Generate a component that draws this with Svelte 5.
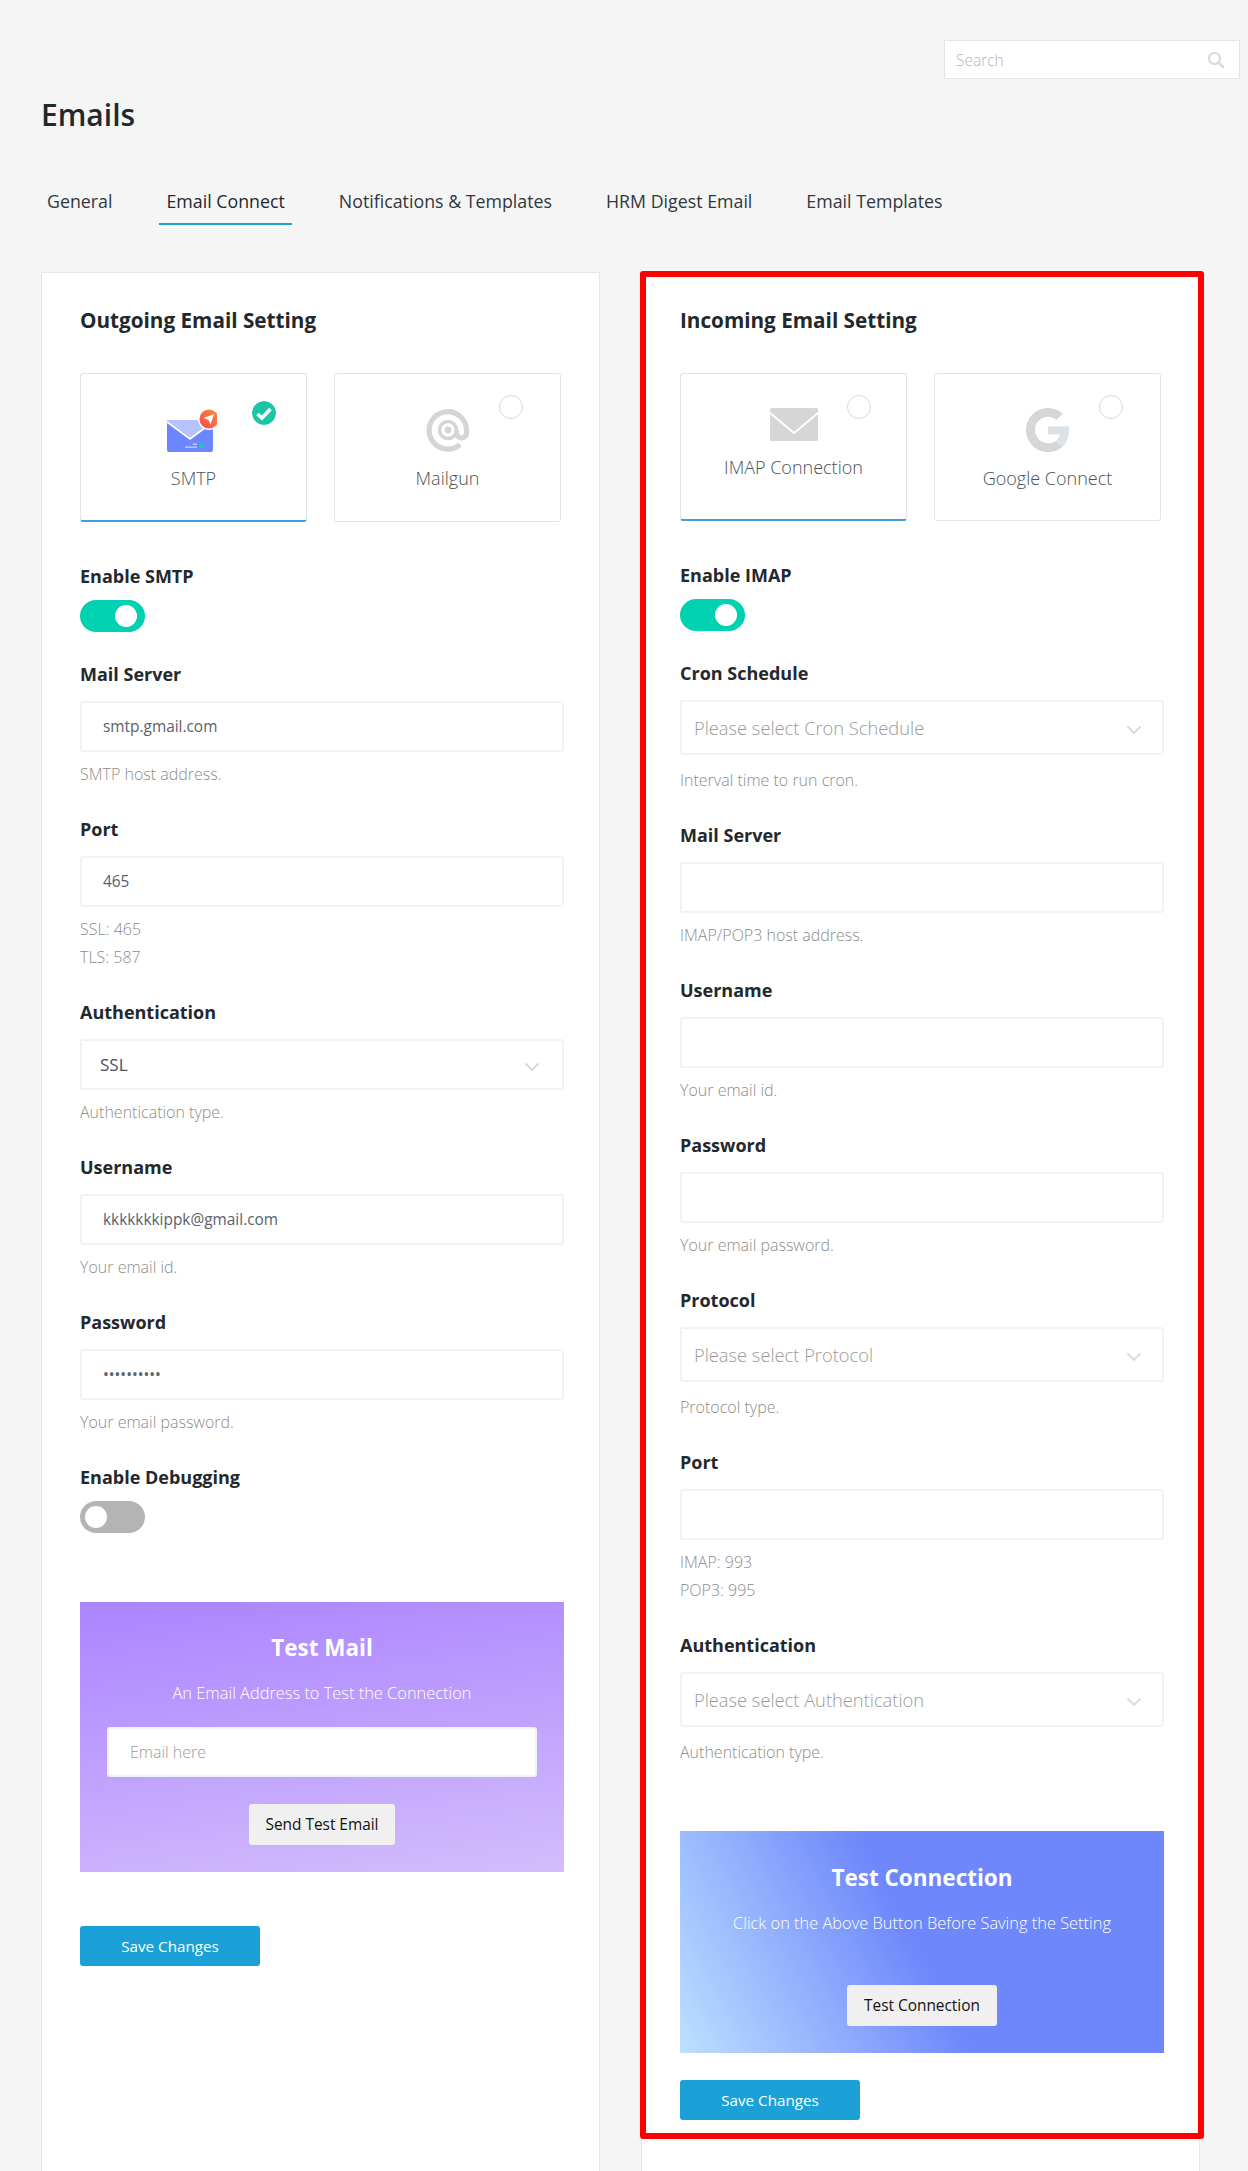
<script>
  // Email settings page: two cards of form fields with provider pickers and test panels.
  const tabs = ['General', 'Email Connect', 'Notifications & Templates', 'HRM Digest Email', 'Email Templates'];

  const smtpTop = [
    { label: 'Mail Server', value: 'smtp.gmail.com', hint: ['SMTP host address.'] },
    { label: 'Port', value: '465', hint: ['SSL: 465', 'TLS: 587'] },
    { label: 'Authentication', select: 'SSL', filled: true, short: true, hint: ['Authentication type.'] },
    { label: 'Username', value: 'kkkkkkkippk@gmail.com', hint: ['Your email id.'] },
    { label: 'Password', value: 'abcdefghij', type: 'password', hint: ['Your email password.'] },
  ];

  const imapFields = [
    { label: 'Cron Schedule', select: 'Please select Cron Schedule', hint: ['Interval time to run cron.'] },
    { label: 'Mail Server', value: '', hint: ['IMAP/POP3 host address.'] },
    { label: 'Username', value: '', hint: ['Your email id.'] },
    { label: 'Password', value: '', hint: ['Your email password.'] },
    { label: 'Protocol', select: 'Please select Protocol', hint: ['Protocol type.'] },
    { label: 'Port', value: '', hint: ['IMAP: 993', 'POP3: 995'] },
    { label: 'Authentication', select: 'Please select Authentication', hint: ['Authentication type.'] },
  ];
</script>

{#snippet field(f)}
  <div class="group">
    <div class="label">{f.label}</div>
    {#if f.select}
      <div class="select" class:short={f.short} class:filled={f.filled}>
        <span>{f.select}</span>
        <svg class="chev" width="16" height="10" viewBox="0 0 16 10"><path d="M1.5 1.5 8 8l6.500-6.500" fill="none" stroke="#d5dae0" stroke-width="1.800" /></svg>
      </div>
    {:else}
      <input class="input" type={f.type ?? 'text'} value={f.value} aria-label={f.label} />
    {/if}
    <div class="hint" class:tight={f.select && !f.short}>
      {#each f.hint as line}<div>{line}</div>{/each}
    </div>
  </div>
{/snippet}

{#snippet toggle(on)}
  <div class="toggle" class:on><span class="knob"></span></div>
{/snippet}

<div class="page">
  <div class="search">
    <span>Search</span>
    <svg width="18" height="18" viewBox="0 0 18 18"><circle cx="7.500" cy="7.500" r="5.500" fill="none" stroke="#dadada" stroke-width="2.200" /><path d="M11.500 11.500 16 16" stroke="#dadada" stroke-width="2.800" stroke-linecap="round" /></svg>
  </div>
  <h1>Emails</h1>
  <nav class="tabs">
    {#each tabs as t, i}
      <div class="tab" class:active={i === 1}>{t}</div>
    {/each}
  </nav>

  <div class="cols">
    <section class="card">
      <h2>Outgoing Email Setting</h2>
      <div class="providers">
        <div class="provider active">
          <svg class="check" width="24" height="24" viewBox="0 0 24 24"><circle cx="12" cy="12" r="12" fill="#1bc5a5" /><path d="M5.500 13 10 17 18.500 8" fill="none" stroke="#fff" stroke-width="3.600" /></svg>
          <svg class="logo smtp" width="50" height="44" viewBox="0 0 50 44">
            <defs>
              <linearGradient id="badge" x1="1" y1="0" x2="0" y2="1">
                <stop offset="0" stop-color="#f98f3a" />
                <stop offset="1" stop-color="#fb4450" />
              </linearGradient>
            </defs>
            <rect x="0" y="12" width="46" height="32" rx="2" fill="#6b86ff" />
            <path d="M0 14v-1a1 1 0 0 1 1-1h44a1 1 0 0 1 1 1v1L23 31z" fill="#b7c3ff" />
            <path d="M0 14 23 31 46 14" fill="none" stroke="#fff" stroke-width="1.600" />
            <circle cx="34.500" cy="38" r="2.500" fill="#19c9b0" />
            <rect x="26" y="35.500" width="4" height="1.500" fill="#c5d0ff" />
            <rect x="18" y="38.500" width="12" height="1.300" fill="#c5d0ff" />
            <circle cx="42" cy="11" r="11" fill="#fff" />
            <circle cx="42" cy="11" r="9.500" fill="url(#badge)" />
            <path d="M36.500 10 47 6 43.500 16.500 41.500 12z" fill="#fff" />
          </svg>
          <div class="name">SMTP</div>
        </div>
        <div class="provider">
          <span class="radio"></span>
          <svg class="logo" width="44" height="44" viewBox="0 0 44 44">
            <circle cx="22" cy="22" r="3.500" fill="#d5d5d5" />
            <circle cx="22" cy="22" r="8.500" fill="none" stroke="#d5d5d5" stroke-width="3.600" />
            <path d="M30.500 22v3a5 5 0 0 0 10 0V22A18.700 18.700 0 1 0 34 36.500" fill="none" stroke="#d5d5d5" stroke-width="5.200" />
          </svg>
          <div class="name">Mailgun</div>
        </div>
      </div>

      <div class="group">
        <div class="label">Enable SMTP</div>
        {@render toggle(true)}
      </div>
      {#each smtpTop as f}
        {@render field(f)}
      {/each}
      <div class="group debug">
        <div class="label">Enable Debugging</div>
        {@render toggle(false)}
      </div>

      <div class="panel purple">
        <h3>Test Mail</h3>
        <p>An Email Address to Test the Connection</p>
        <div class="panel-input">Email here</div>
        <button type="button" class="ghost">Send Test Email</button>
      </div>
      <button type="button" class="save mail">Save Changes</button>
    </section>

    <section class="card">
      <h2>Incoming Email Setting</h2>
      <div class="providers">
        <div class="provider active">
          <span class="radio"></span>
          <svg class="logo up" width="48" height="33" viewBox="0 0 48 33">
            <rect width="48" height="33" rx="1.500" fill="#d6d6d6" />
            <path d="M0 5 24 25 48 5" fill="none" stroke="#fff" stroke-width="2" />
          </svg>
          <div class="name">IMAP Connection</div>
        </div>
        <div class="provider">
          <span class="radio"></span>
          <svg class="logo" width="44" height="44" viewBox="0 0 48 48">
            <path fill="#d6d6d6" d="M24 9.500c3.900 0 6.900 1.500 9.100 3.500l6.800-6.800C35.700 2.300 30.300 0 24 0 14.600 0 6.500 5.400 2.600 13.200l7.900 6.100C12.400 13.700 17.700 9.500 24 9.500z" />
            <path fill="#dce3e8" d="M47 24.500c0-1.600-.2-3.100-.4-4.500H24v9h12.900c-.6 3-2.200 5.500-4.700 7.200l7.700 6C44.400 37.900 47 31.800 47 24.500z" />
            <path fill="#d6d6d6" d="M10.500 28.700C10 27.200 9.800 25.600 9.800 24s.3-3.200.7-4.700l-7.900-6.100C.9 16.500 0 20.100 0 24s.9 7.500 2.600 10.800l7.900-6.100z" />
            <path fill="#d6d6d6" d="M24 48c6.500 0 11.900-2.100 15.900-5.800l-7.700-6c-2.200 1.400-4.900 2.300-8.200 2.300-6.300 0-11.600-4.200-13.500-9.800l-7.900 6.100C6.500 42.600 14.600 48 24 48z" />
          </svg>
          <div class="name">Google Connect</div>
        </div>
      </div>

      <div class="group">
        <div class="label">Enable IMAP</div>
        {@render toggle(true)}
      </div>
      {#each imapFields as f}
        {@render field(f)}
      {/each}

      <div class="panel blue">
        <h3>Test Connection</h3>
        <p>Click on the Above Button Before Saving the Setting</p>
        <button type="button" class="ghost wide">Test Connection</button>
      </div>
      <button type="button" class="save imap">Save Changes</button>
    </section>
  </div>

  <div class="highlight"></div>
</div>

<style>
  :global(body) {
    background: #f5f5f5;
    font-family: "Open Sans", "Noto Sans", sans-serif;
    color: #23282d;
  }
  .page {
    position: relative;
    height: 2171px;
    overflow: hidden;
    box-sizing: border-box;
    padding: 40px 8px 0 41px;
  }
  .search {
    display: flex;
    align-items: center;
    justify-content: space-between;
    box-sizing: border-box;
    width: 296px;
    height: 39px;
    margin-left: auto;
    padding: 0 14px 0 11px;
    font-size: 15.500px;
    font-weight: 300;
    color: #b4b4b4;
    background: #fff;
    border: 1px solid #e5e5e5;
  }
  h1 {
    margin: 16px 0 0;
    font-size: 30px;
    font-weight: 600;
    line-height: 40px;
  }
  .tabs {
    display: flex;
    gap: 54px;
    margin: 52px 0 0 6px;
    font-size: 17.800px;
  }
  .tab {
    padding: 0 0 10px;
    line-height: 28px;
    color: #32373c;
    font-weight: 400;
  }
  .tab.active {
    margin: 0 -7px;
    padding: 0 7px 8px;
    color: #23282d;
    border-bottom: 2px solid #1ba0d7;
  }
  .cols {
    display: grid;
    grid-template-columns: 559px 559px;
    gap: 41px;
    margin-top: 47px;
  }
  .card {
    box-sizing: border-box;
    height: 1950px;
    padding: 32px 35px 0 38px;
    background: #fff;
    border: 1px solid #e6e6e6;
  }
  h2 {
    margin: 0;
    font-size: 20.700px;
    font-weight: 700;
    line-height: 30px;
    color: #23282d;
  }
  .providers {
    display: grid;
    grid-template-columns: 227px 227px;
    gap: 27px;
    margin: 38px 0 42px;
  }
  .provider {
    position: relative;
    box-sizing: border-box;
    display: flex;
    flex-direction: column;
    align-items: center;
    height: 149px;
    padding-top: 34px;
    border: 1px solid #e2e4e8;
    border-radius: 3px;
  }
  .card:last-child .provider {
    height: 148px;
  }
  .provider.active {
    border-bottom: 2px solid #3ba0da;
  }
  .logo {
    height: 44px;
  }
  .logo.up {
    height: 33px;
  }
  .logo.smtp {
    margin-right: 3px;
  }
  .name {
    margin-top: 14px;
    font-size: 18px;
    font-weight: 300;
    line-height: 24px;
    color: #4a5058;
  }
  .radio,
  .check {
    position: absolute;
    top: 21px;
    right: 37px;
    box-sizing: border-box;
    width: 24px;
    height: 24px;
    border: 1px solid #d8d8d8;
    border-radius: 50%;
  }
  .active .radio {
    right: 35px;
  }
  .check {
    top: 27px;
    right: 30px;
    border: 0;
  }
  .group {
    margin-bottom: 29px;
  }
  .group:has(> .toggle) {
    margin-bottom: 0;
  }
  .label {
    margin-bottom: 15px;
    font-size: 18px;
    font-weight: 700;
    line-height: 24px;
    color: #23282d;
  }
  .toggle {
    position: relative;
    width: 65px;
    height: 32px;
    margin: -3px 0 30px;
    background: #b4b4b4;
    border-radius: 16px;
  }
  .toggle.on {
    background: #00d1b0;
  }
  .knob {
    position: absolute;
    top: 5px;
    left: 5px;
    width: 22px;
    height: 22px;
    background: #fff;
    border-radius: 50%;
  }
  .toggle.on .knob {
    left: 35px;
  }
  .input,
  .select {
    display: flex;
    align-items: center;
    justify-content: space-between;
    box-sizing: border-box;
    width: 100%;
    height: 51px;
    padding: 0 21px;
    font: inherit;
    font-size: 15.400px;
    color: #5a6068;
    background: #fff;
    border: 2px solid #f0f2f5;
    border-radius: 3px;
    outline: 0;
  }
  .select {
    height: 55px;
    padding: 0 20px 0 12px;
    font-weight: 300;
    font-size: 18.300px;
    color: #9a9a9a;
  }
  .select.short {
    height: 51px;
    padding: 0 22px 0 18px;
  }
  .select.filled {
    color: #4a5058;
    font-weight: 400;
    font-size: 17px;
  }
  .chev {
    margin-top: 4px;
  }
  .hint {
    margin-top: 8px;
    font-size: 16px;
    font-weight: 300;
    line-height: 28px;
    color: #8c8c8c;
  }
  .hint.tight {
    margin-top: 11px;
  }
  .debug .toggle {
    margin-bottom: 69px;
  }
  .panel {
    display: flex;
    flex-direction: column;
    align-items: center;
    box-sizing: border-box;
    color: #fff;
  }
  .panel h3 {
    margin: 0;
    font-size: 22.500px;
    font-weight: 700;
    line-height: 30px;
  }
  .panel p {
    margin: 15px 0 0;
    font-size: 16.400px;
    font-weight: 300;
    line-height: 30px;
  }
  .purple {
    height: 270px;
    padding-top: 31px;
    background: linear-gradient(172deg, #ab84ff 0%, #d3bdfc 100%);
  }
  .blue {
    height: 222px;
    margin-top: 65px;
    padding-top: 32px;
    background: linear-gradient(62deg, #bde0ff 0%, #6e87fb 49%, #6e87fb 100%);
  }
  .panel-input {
    box-sizing: border-box;
    width: 430px;
    height: 50px;
    margin-top: 19px;
    padding: 0 21px;
    font-size: 16px;
    font-weight: 300;
    line-height: 46px;
    color: #9a9a9a;
    background: #fff;
    border: 2px solid #f0f2f5;
    border-radius: 3px;
  }
  .ghost {
    width: 146px;
    height: 41px;
    margin-top: 27px;
    padding: 0;
    font: inherit;
    font-size: 15.400px;
    color: #111;
    background: #f0f0f0;
    border: 0;
    border-radius: 3px;
  }
  .ghost.wide {
    width: 150px;
    margin-top: 47px;
  }
  .save {
    display: block;
    width: 180px;
    height: 40px;
    padding: 0;
    font: inherit;
    font-size: 15.200px;
    color: #fff;
    background: #1ba0d7;
    border: 0;
    border-radius: 3px;
  }
  .save.mail {
    margin-top: 54px;
  }
  .save.imap {
    margin-top: 27px;
  }
  .highlight {
    position: absolute;
    left: 640px;
    top: 271px;
    box-sizing: border-box;
    width: 564px;
    height: 1868px;
    border: 6px solid #f00;
    border-radius: 3px;
    pointer-events: none;
  }
</style>
